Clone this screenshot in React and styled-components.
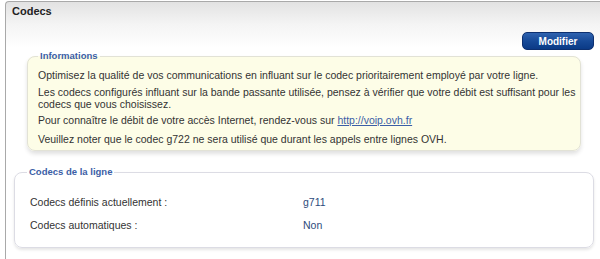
import React from "react";
import styled, { createGlobalStyle } from "styled-components";

const GlobalStyle = createGlobalStyle`
  html, body {
    margin: 0;
    padding: 0;
    background: #ffffff;
    overflow: hidden;
  }
  body {
    font-family: "Liberation Sans", Arial, sans-serif;
    font-size: 10.5px;
    color: #333333;
  }
`;

const Panel = styled.div`
  margin: 1px 0 0 5px;
  height: 257px;
  border: 1px solid #a9a9a9;
  border-right: none;
  border-bottom: none;
  border-top-left-radius: 4px;
  background: linear-gradient(to bottom, #e2e2e2 0px, #f4f4f4 22px, #ffffff 46px);
`;

const Header = styled.h2`
  margin: 0;
  height: 20px;
  line-height: 18px;
  padding: 0 6px;
  font-size: 11px;
  font-weight: bold;
  color: #222222;
`;

const ButtonRow = styled.div`
  display: flex;
  justify-content: flex-end;
  padding: 10px 6px 0 0;
`;

const Button = styled.button`
  width: 72px;
  height: 18px;
  border: 1px solid #0d3070;
  border-radius: 5px;
  background: linear-gradient(to bottom, #2f63b0 0%, #174a98 50%, #0b3a86 100%);
  color: #ffffff;
  font-family: "Liberation Sans", Arial, sans-serif;
  font-size: 10px;
  font-weight: bold;
  padding: 0;
  cursor: pointer;
`;

const Fieldset = styled.fieldset`
  margin: ${(p) => p.$margin};
  padding: ${(p) => p.$padding};
  border: 1px solid ${(p) => (p.$info ? "#e2e2d6" : "#dcdce4")};
  border-radius: 8px;
  background: ${(p) => (p.$info ? "#fdfde7" : "#ffffff")};
  box-shadow: ${(p) =>
    p.$info ? "0 3px 4px rgba(0, 0, 0, 0.12)" : "0 2px 3px rgba(0, 0, 0, 0.1)"};
  min-width: 0;
`;

const Legend = styled.legend`
  padding: 0 2px;
  margin-left: 0;
  font-size: 9.5px;
  font-weight: bold;
  color: #3b5ea6;
  line-height: 12px;
`;

const InfoText = styled.p`
  margin: ${(p) => p.$margin || "4px 0"};
  line-height: 12px;
  color: #333333;

  a {
    color: #3b5ea6;
    text-decoration: underline;
  }
`;

const Rows = styled.div`
  display: grid;
  grid-template-columns: 273px 1fr;
  row-gap: 11px;
  padding-left: 3px;
`;

const Label = styled.div`
  line-height: 12px;
  color: #333333;
`;

const Value = styled.div`
  line-height: 12px;
  color: #2d4b7c;
`;

const App = () => {
  return (
    <>
      <GlobalStyle />
      <Panel>
        <Header>Codecs</Header>
        <ButtonRow>
          <Button type="button">Modifier</Button>
        </ButtonRow>
        <Fieldset $info $margin="0 19px 0 21px" $padding="3px 3px 5px 10px">
          <Legend>Informations</Legend>
          <InfoText>
            Optimisez la qualité de vos communications en influant sur le codec
            prioritairement employé par votre ligne.
          </InfoText>
          <InfoText $margin="5px 0 4px">
            Les codecs configurés influant sur la bande passante utilisée, pensez à
            vérifier que votre débit est suffisant pour les codecs que vous
            choisissez.
          </InfoText>
          <InfoText>
            Pour connaître le débit de votre accès Internet, rendez-vous sur{" "}
            <a href="#">http://voip.ovh.fr</a>
          </InfoText>
          <InfoText $margin="7px 0 0">
            Veuillez noter que le codec g722 ne sera utilisé que durant les appels
            entre lignes OVH.
          </InfoText>
        </Fieldset>
        <Fieldset $margin="15px 6px 0 8px" $padding="18px 12px 16px 12px">
          <Legend>Codecs de la ligne</Legend>
          <Rows>
            <Label>Codecs définis actuellement :</Label>
            <Value>g711</Value>
            <Label>Codecs automatiques :</Label>
            <Value>Non</Value>
          </Rows>
        </Fieldset>
      </Panel>
    </>
  );
};

export default App;
